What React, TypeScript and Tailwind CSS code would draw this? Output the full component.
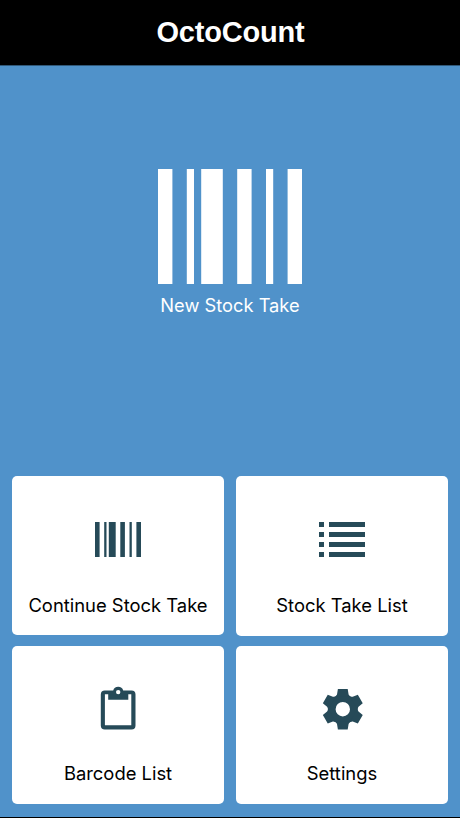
import type { ReactNode } from "react";

const GEAR_ANGLES = [0, 60, 120, 180, 240, 300];

function BarcodeIcon({ className }: { className: string }) {
  return (
    <svg
      viewBox="0 0 20 16"
      preserveAspectRatio="none"
      fill="currentColor"
      className={className}
    >
      <path d="M0 0h2v16H0zM4 0h1v16H4zM6 0h3v16H6zM11 0h2v16h-2zM15 0h1v16h-1zM18 0h2v16h-2z" />
    </svg>
  );
}

function ListIcon({ className }: { className: string }) {
  return (
    <svg viewBox="0 0 46 35" fill="currentColor" className={className}>
      <path d="M0 0h5v5H0zM10 0h36v5H10zM0 10h5v5H0zM10 10h36v5H10zM0 20h5v5H0zM10 20h36v5H10zM0 30h5v5H0zM10 30h36v5H10z" />
    </svg>
  );
}

function ClipboardIcon({ className }: { className: string }) {
  return (
    <svg viewBox="0 0 36 46" fill="currentColor" className={className}>
      <path
        fillRule="evenodd"
        d="M4.8 4.5h8.4a5.2 5.2 0 0 1 10 0h8.3a4 4 0 0 1 4 4v31a4 4 0 0 1-4 4H4.8a4 4 0 0 1-4-4v-31a4 4 0 0 1 4-4zM4.9 8.2v31.1h26.4V8.2h-3v5.6H8.2V8.2zM18.2 3.9a2.2 2.2 0 1 0 0 4.4 2.2 2.2 0 0 0 0-4.4z"
      />
    </svg>
  );
}

function GearIcon({ className }: { className: string }) {
  return (
    <svg viewBox="-21.8 -21.2 42 42" fill="currentColor" className={className}>
      <circle r="11.1" fill="none" stroke="currentColor" strokeWidth="7.8" />
      {GEAR_ANGLES.map((angle) => (
        <path
          key={angle}
          d="M-4.9-20.2H4.9L5.8-14.8 7.2-12.5h-14.4L-5.8-14.8z"
          transform={`rotate(${angle})`}
        />
      ))}
    </svg>
  );
}

interface MenuCardProps {
  label: string;
  icon: ReactNode;
  className: string;
  iconClassName: string;
}

function MenuCard({ label, icon, className, iconClassName }: MenuCardProps) {
  return (
    <button
      className={`flex flex-col items-center rounded-[5px] bg-white text-[#264a58] ${className}`}
    >
      <span className={`flex shrink-0 items-center justify-center ${iconClassName}`}>
        {icon}
      </span>
      <span className="whitespace-nowrap text-[18.4px] leading-6 text-black">
        {label}
      </span>
    </button>
  );
}

export default function App() {
  return (
    <div className="flex h-[818px] w-[460px] flex-col border-b border-black bg-[#5092ca] font-['Inter',sans-serif]">
      <header className="flex h-[66px] shrink-0 justify-center border-b border-[#305878] bg-black pt-[14px]">
        <h1 className="pl-px font-['Liberation_Sans',sans-serif] text-[29px] font-bold leading-9 tracking-[-0.2px] text-white">
          OctoCount
        </h1>
      </header>

      <button className="flex h-[410px] shrink-0 flex-col items-center pt-[103px] text-white">
        <BarcodeIcon className="h-[115px] w-36" />
        <span className="mt-[9px] text-[18.3px] leading-6">New Stock Take</span>
      </button>

      <div className="grid grid-cols-2 items-start gap-x-3 px-3">
        <MenuCard
          label="Continue Stock Take"
          icon={<BarcodeIcon className="h-[35px] w-[46px]" />}
          className="h-[159px]"
          iconClassName="h-[117px] pt-[10px]"
        />
        <MenuCard
          label="Stock Take List"
          icon={<ListIcon className="h-[35px] w-[46px]" />}
          className="mb-[10px] h-40"
          iconClassName="h-[117px] pt-[10px]"
        />
        <MenuCard
          label="Barcode List"
          icon={<ClipboardIcon className="h-[46px] w-9" />}
          className="h-[158px]"
          iconClassName="h-[115px] pt-[11px]"
        />
        <MenuCard
          label="Settings"
          icon={<GearIcon className="size-[42px]" />}
          className="h-[158px]"
          iconClassName="h-[115px] pt-[11px]"
        />
      </div>
    </div>
  );
}
